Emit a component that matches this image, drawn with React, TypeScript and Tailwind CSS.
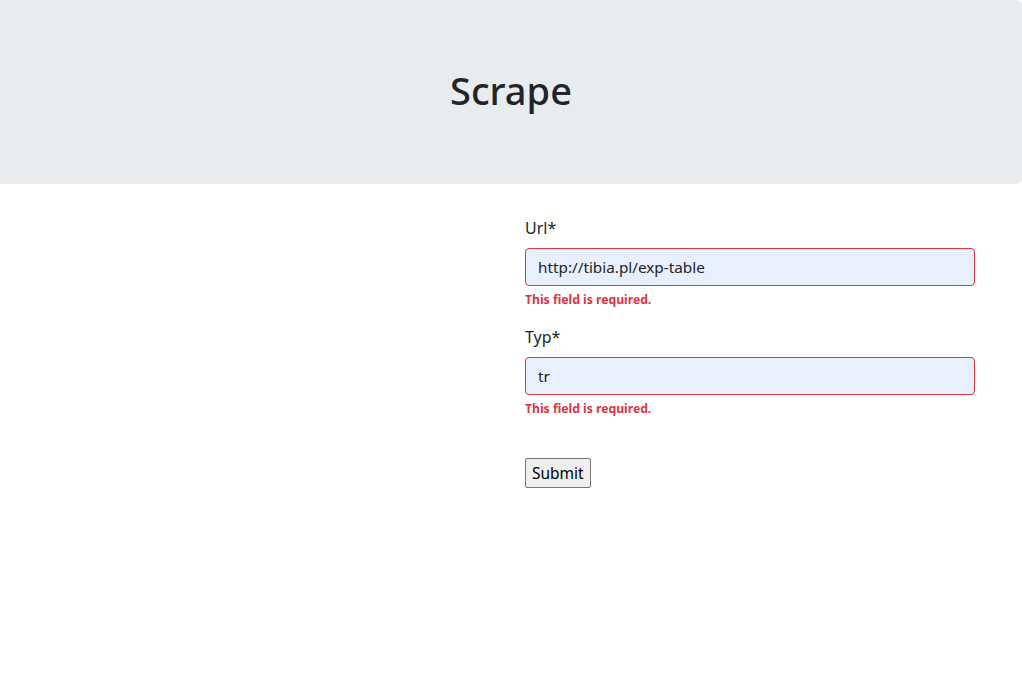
const Field = ({ label, value }: { label: string; value: string }) => (
  <div className="mb-4">
    <label className="block mb-2 text-base leading-6 text-[#212529]">{label}</label>
    <input
      readOnly
      value={value}
      className="block w-full h-[38px] px-3 py-1.5 text-[15.3px] leading-6 text-[#212529] bg-[#e8f0fe] border border-[#dc3545] rounded outline-none"
    />
    <div className="mt-1 text-[12.2px] leading-[19.2px] font-bold text-[#dc3545]">This field is required.</div>
  </div>
);

export default function App() {
  return (
    <div className="min-h-[676px] bg-white font-['Noto_Sans','Open_Sans',sans-serif] text-[#212529]">
      <div className="bg-[#e9ecef] rounded-r-md px-8 py-16 mb-8">
        <h1 className="text-center text-[38px] leading-[52px] font-medium mb-1">Scrape</h1>
      </div>
      <div className="ml-[525px] w-[450px]">
        <Field label="Url*" value="http://tibia.pl/exp-table" />
        <Field label="Typ*" value="tr" />
        <div className="pt-6">
          <button className="h-[30px] px-[6px] text-[15.5px] leading-none text-black bg-[#efefef] border border-[#767676] rounded-[2px]">
            Submit
          </button>
        </div>
      </div>
    </div>
  );
}
